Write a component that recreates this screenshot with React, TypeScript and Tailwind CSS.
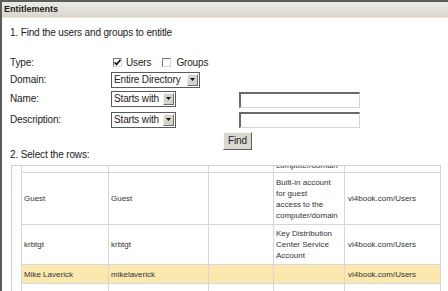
import React from "react";

function Select({ w, text }: { w: number; text: string }) {
  return (
    <div
      className="h-[16px] border border-[#5a5a5a] bg-white flex items-center pl-[2px] pr-[1px] shrink-0"
      style={{ width: w }}
    >
      <span className="leading-[12px] whitespace-nowrap">{text}</span>
      <div className="ml-auto shrink-0 w-[11px] h-[12px] bg-[#d6d3cc] border-t border-l border-[#f4f3f0] border-b border-r border-b-[#6e6e6e] border-r-[#6e6e6e] flex items-center justify-center">
        <svg width="5" height="3" viewBox="0 0 5 3">
          <path d="M0 0H5L2.5 3Z" fill="#111" />
        </svg>
      </div>
    </div>
  );
}

function Check({ checked }: { checked?: boolean }) {
  return (
    <div className="w-[9px] h-[9px] bg-white border-t border-l border-[#7a7a7a] border-b border-r border-b-[#d8d5ce] border-r-[#d8d5ce] flex items-center justify-center shrink-0">
      {checked && (
        <svg width="7" height="7" viewBox="0 0 7 7">
          <path d="M0.5 3.2L2.5 5.5L6.5 0.8" stroke="#111" strokeWidth="1.6" fill="none" />
        </svg>
      )}
    </div>
  );
}

function TextInput() {
  return (
    <div className="w-[121px] h-[16px] bg-white border-t-2 border-l-2 border-[#6a6a6a] border-b border-r border-b-[#d8d5ce] border-r-[#d8d5ce] shrink-0" />
  );
}

const cellBase = "border-r border-[#d6d6d6] flex items-center shrink-0 overflow-hidden";

function Row({
  h,
  cells,
  bg,
  offset,
}: {
  h: number;
  cells: (React.ReactNode | null)[];
  bg?: string;
  offset?: boolean;
}) {
  const widths = [87, 100, 65, 71, 96];
  const pads = ["pl-[2px]", "pl-[2px]", "pl-[2px]", "pl-[2px]", "pl-[3px]"];
  return (
    <div
      className={`flex border-b border-[#d6d6d6] shrink-0 ${bg ?? ""}`}
      style={{ height: h }}
    >
      {widths.map((w, i) => (
        <div
          key={i}
          className={`${cellBase} ${pads[i]} ${offset ? "items-start" : ""}`}
          style={{ width: w }}
        >
          {offset ? (
            <div className="-mt-[6px] leading-[11px] whitespace-nowrap">{cells[i]}</div>
          ) : (
            <div className="leading-[11px] whitespace-nowrap">{cells[i]}</div>
          )}
        </div>
      ))}
    </div>
  );
}

export default function App() {
  return (
    <div className="w-[448px] h-[291px] overflow-hidden bg-white border-t-2 border-l-2 border-[#5c5c5c] font-['Liberation_Sans',Arial,sans-serif] text-[#222] flex flex-col">
      <div className="h-[16px] shrink-0 bg-gradient-to-b from-[#eceae5] to-[#d9d6ce] border-b border-[#ebe4d6] pl-[2px] text-[9px] font-bold leading-[15px] text-[#1a1a1a]">
        Entitlements
      </div>
      <div className="pl-[8px] flex flex-col text-[10px] tracking-[-0.15px]">
        <div className="mt-[9px] leading-[12px]">1. Find the users and groups to entitle</div>

        <div className="mt-[16px] h-[14px] flex items-center">
          <div className="w-[101px] shrink-0">Type:</div>
          <div className="ml-[2px] flex items-center">
            <Check checked />
            <span className="ml-[4px]">Users</span>
            <div className="ml-[11px]">
              <Check />
            </div>
            <span className="ml-[5px]">Groups</span>
          </div>
        </div>

        <div className="mt-[2px] h-[17px] flex items-center">
          <div className="w-[101px] shrink-0">Domain:</div>
          <Select w={89} text="Entire Directory" />
        </div>

        <div className="mt-[2px] h-[17px] flex items-center">
          <div className="w-[101px] shrink-0">Name:</div>
          <Select w={65} text="Starts with" />
          <div className="ml-[63px] mt-[2px]">
            <TextInput />
          </div>
        </div>

        <div className="mt-[4px] h-[17px] flex items-center">
          <div className="w-[101px] shrink-0">Description:</div>
          <Select w={65} text="Starts with" />
          <div className="ml-[63px] mt-[1px]">
            <TextInput />
          </div>
        </div>

        <div className="mt-[4px] h-[18px] flex">
          <div className="ml-[213px] w-[29px] h-[18px] bg-[#dad7d0] border-t border-l border-[#fbfaf8] border-b border-r border-b-[#5e5e5e] border-r-[#5e5e5e] flex items-center justify-center leading-[12px]">
            Find
          </div>
        </div>

        <div className="mt-[-1px] leading-[12px]">2. Select the rows:</div>

        <div className="mt-[4px] ml-[1px] w-[430px] h-[140px] border-l border-t border-[#d0d0d0] flex text-[8px] tracking-normal text-[#333]">
          <div className="w-[9px] shrink-0" />
          <div className="border-l border-[#d6d6d6] flex flex-col">
            <Row h={7} offset cells={[null, null, null, "computer/domain", null]} />
            <Row
              h={52}
              cells={[
                "Guest",
                "Guest",
                null,
                <>
                  Built-in account
                  <br />
                  for guest
                  <br />
                  access to the
                  <br />
                  computer/domain
                </>,
                "vi4book.com/Users",
              ]}
            />
            <Row
              h={40}
              cells={[
                "krbtgt",
                "krbtgt",
                null,
                <>
                  Key Distribution
                  <br />
                  Center Service
                  <br />
                  Account
                </>,
                "vi4book.com/Users",
              ]}
            />
            <Row
              h={19}
              bg="bg-[#fbe8af]"
              cells={["Mike Laverick", "mikelaverick", null, null, "vi4book.com/Users"]}
            />
            <Row h={20} cells={[null, null, null, null, null]} />
          </div>
        </div>
      </div>
    </div>
  );
}
